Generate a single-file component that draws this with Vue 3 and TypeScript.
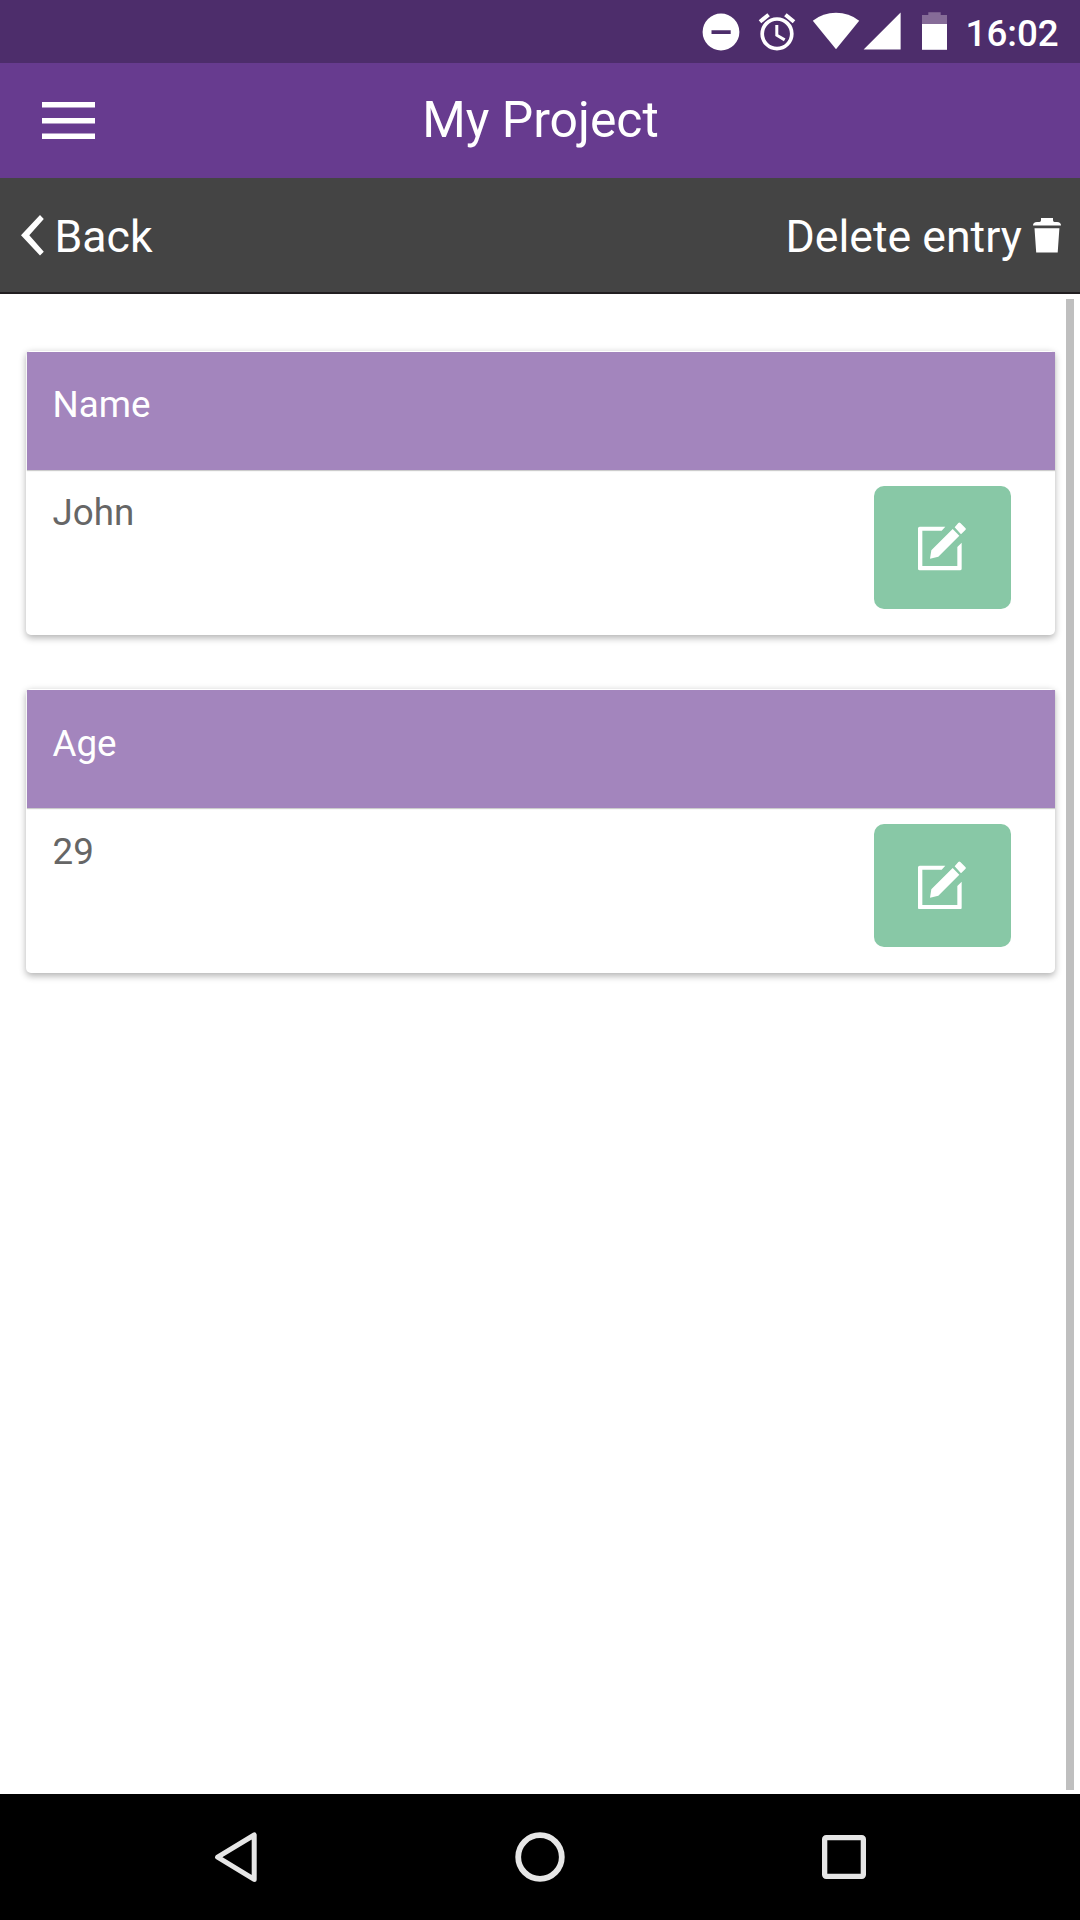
<script setup lang="ts">
interface Entry {
  label: string
  value: string
}

const entries: Entry[] = [
  { label: 'Name', value: 'John' },
  { label: 'Age', value: '29' },
]
</script>

<template>
  <div class="screen">
    <div class="status">
      <svg class="dnd" width="38" height="38" viewBox="702 13 38 38">
        <path fill="#fff" fill-rule="evenodd" d="M721 13.6a18.4 18.4 0 1 0 0 36.8a18.4 18.4 0 1 0 0-36.8zM711.5 30.2h19.2v3.7h-19.2z" />
      </svg>
      <svg class="alarm" width="38" height="38" viewBox="758 13 38 38" fill="none" stroke="#fff">
        <circle cx="777" cy="33.8" r="14.8" stroke-width="3.7" />
        <path stroke-width="4" d="M760 21.7l8.6-7M794 21.7l-8.6-7" />
        <path stroke-width="3" d="M776.8 25v10.2l7.9 4.7" />
      </svg>
      <svg class="wifi" width="48" height="38" viewBox="812 12 48 38">
        <path fill="#fff" d="M836 49.2L812.8 20.7Q823 12.8 836 12.8T859.2 20.7z" />
      </svg>
      <svg class="signal" width="38" height="38" viewBox="863 12 38 38">
        <path fill="#fff" d="M863.6 49.5h37V12.5z" />
      </svg>
      <svg class="battery" width="25" height="38" viewBox="922 12 25 38">
        <path fill="#866c98" d="M922 24v-9h6.3v-2.7h12.4V15h6.3v9z" />
        <path fill="#fff" d="M922 24h25v25.8h-25z" />
      </svg>
      <span class="clock">16:02</span>
    </div>

    <header class="header">
      <svg class="menu" width="53" height="38" viewBox="0 0 53 38" fill="#fff">
        <path d="M0 0h53v5.6H0zM0 16h53v5.6H0zM0 31.5h53v5.6H0z" />
      </svg>
      <h1 class="title">My Project</h1>
    </header>

    <div class="toolbar">
      <a class="action">
        <svg class="chevron" width="23" height="41" viewBox="0 0 23 41">
          <path fill="#fff" d="M0 20.3L19 0l3.8 4L8.3 20.2l14.5 16.5L19 40.4z" />
        </svg>
        <span class="back-text">Back</span>
      </a>
      <a class="action">
        <span>Delete entry</span>
        <svg class="trash" width="28" height="35" viewBox="0 0 28 35">
          <path fill="#fff" d="M0 7.6Q0 4 4 4h2.5Q8 4 8 2.2V0h12v2.2Q20 4 21.5 4H24q4 0 4 3.6zM1.5 10.3h24.9l-1.7 24.2H3.2z" />
        </svg>
      </a>
    </div>

    <main class="content">
      <div class="list">
        <section v-for="entry in entries" :key="entry.label" class="card">
          <div class="card-head">{{ entry.label }}</div>
          <div class="card-body">
            <span class="value">{{ entry.value }}</span>
            <button class="edit" type="button">
              <svg width="48" height="48.67" viewBox="204 246 144 146" fill="#fff">
                <path d="M286 260H209q-5 0-5 5V386q0 5 5 5H330q5 0 5-5V308l-13 13V378H217V272H275z" />
                <path d="M240 356l4-25L308 267l20 20L265 350zM314 262l11-13q3-3 6 0l15 15q3 3 0 6l-13 13z" />
              </svg>
            </button>
          </div>
        </section>
      </div>
      <div class="scrollbar"></div>
    </main>

    <nav class="nav">
      <svg width="44" height="52" viewBox="0 0 44 52" fill="none" stroke="#e6e6e6" stroke-width="5" stroke-linejoin="round">
        <path d="M2.6 26.2L39.2 4v44.4z" />
      </svg>
      <svg class="home" width="50" height="50" viewBox="0 0 50 50" fill="none" stroke="#e6e6e6" stroke-width="5.8">
        <circle cx="25" cy="25" r="21.8" />
      </svg>
      <svg width="44" height="44" viewBox="0 0 44 44" fill="none" stroke="#e6e6e6" stroke-width="5.3">
        <rect x="2.65" y="2.65" width="38.7" height="38.7" rx="1.5" />
      </svg>
    </nav>
  </div>
</template>

<style>
body {
  background: #fff;
}
</style>

<style scoped>
.screen {
  width: 1080px;
  height: 1920px;
  display: flex;
  flex-direction: column;
  overflow: hidden;
  background: #fff;
  font-family: Roboto, sans-serif;
  color: #fff;
}
svg {
  display: block;
  flex: none;
}
.status {
  height: 63px;
  flex: none;
  box-sizing: border-box;
  display: flex;
  align-items: flex-start;
  justify-content: flex-start;
  padding: 12px 0 0 702px;
  background: #4d2d6b;
}
.dnd {
  margin-top: 1px;
}
.alarm {
  margin: 1px 16px 0 18px;
}
.signal {
  margin: 0 21px 0 3px;
}
.clock {
  margin: 0 0 0 18.5px;
  font-size: 36.75px;
  font-weight: 500;
  line-height: 43px;
}
.header {
  height: 115px;
  flex: none;
  display: grid;
  grid-template-columns: 1fr auto 1fr;
  align-items: center;
  background: #673b8f;
}
.menu {
  margin-left: 42px;
}
.title {
  margin: 0 0 2px 1px;
  font-size: 49.875px;
  font-weight: 400;
  line-height: 60px;
}
.toolbar {
  height: 116px;
  flex: none;
  box-sizing: border-box;
  display: flex;
  justify-content: space-between;
  padding: 32px 19px 0 21px;
  background: #444;
  border-bottom: 2px solid #211e20;
  font-size: 44.625px;
  line-height: 54px;
}
.action {
  display: flex;
}
.chevron {
  margin: 5.3px 10.5px 0 0;
}
.trash {
  margin: 8.3px 0 0 11.2px;
}
.content {
  flex: 1;
  display: flex;
  justify-content: space-between;
  align-items: stretch;
}
.list {
  width: 1029px;
  padding: 56.8px 0 0 26px;
}
.card {
  height: 284px;
  margin-bottom: 54.7px;
  border-radius: 5px;
  background: #fff;
  box-shadow: 0 2.6px 7.9px rgba(0, 0, 0, 0.3);
  font-size: 36.75px;
  line-height: 48px;
  display: flow-root;
}
.card-head {
  height: 118px;
  box-sizing: border-box;
  margin: 1px 0 0 0.5px;
  padding: 29.1px 26px 0 26px;
  background: #a385bd;
  box-shadow: 0 1px 1px #ccc;
}
.card-body {
  display: flex;
  justify-content: space-between;
  padding: 15.8px 44.5px 0 26.5px;
  color: #666;
}
.value {
  margin-top: 3.3px;
}
.edit {
  width: 136.5px;
  height: 123px;
  padding: 0 1px 1.5px 0;
  display: flex;
  align-items: center;
  justify-content: center;
  border: 0;
  border-radius: 10px;
  background: #88c8a6;
}
.scrollbar {
  width: 8px;
  margin: 5px 6px 4px 0;
  background: #bfbfbf;
}
.nav {
  height: 126px;
  flex: none;
  box-sizing: border-box;
  display: flex;
  align-items: center;
  justify-content: space-between;
  padding: 0 214px 0 215px;
  background: #000;
}
.home {
  margin-right: 1px;
}
</style>
